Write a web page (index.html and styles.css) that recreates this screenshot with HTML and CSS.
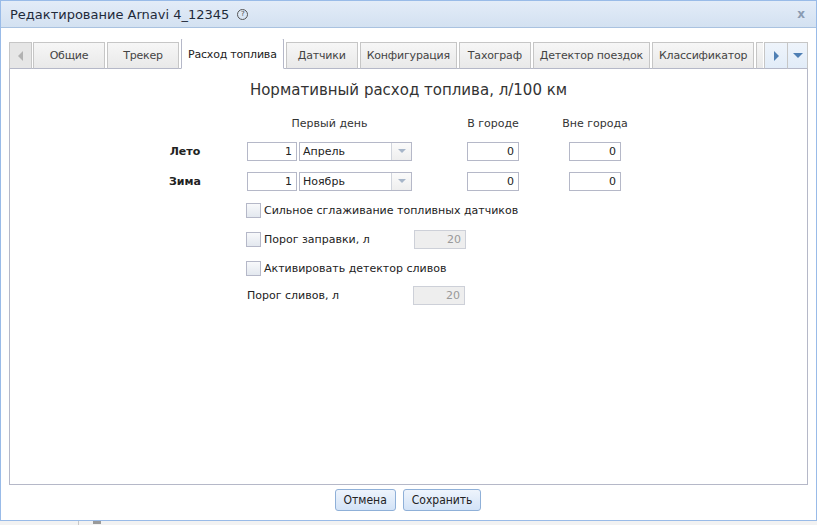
FILE: index.html
```html
<!DOCTYPE html>
<html>
  <head>
    <title>Редактирование Arnavi 4_12345</title>
    <link rel="stylesheet" href="styles.css">
  </head>
  <body>
    <div class="dialog">
      <div class="header">
        <span class="header-title">Редактирование Arnavi 4_12345</span>
        <span class="help">?</span>
        <span class="close">x</span>
      </div>

      <div class="body">
        <div class="tabbar">
          <div class="scroll scroll-left"><span class="tri-left"></span></div>
          <div class="tabs">
            <div class="tab">Общие</div>
            <div class="tab">Трекер</div>
            <div class="tab active">Расход топлива</div>
            <div class="tab">Датчики</div>
            <div class="tab">Конфигурация</div>
            <div class="tab">Тахограф</div>
            <div class="tab">Детектор поездок</div>
            <div class="tab">Классификатор</div>
            <div class="tab tab-cut"></div>
          </div>
          <div class="scroll scroll-right"><span class="tri-right"></span></div>
          <div class="scroll scroll-menu"><span class="tri-down"></span></div>
        </div>

        <div class="panel">
          <p class="panel-title">Нормативный расход топлива, л/100 км</p>

          <div class="row heads">
            <div class="season"></div>
            <div class="date-group">Первый день</div>
            <div class="gap-a"></div>
            <div class="num-col">В городе</div>
            <div class="gap-b"></div>
            <div class="num-col">Вне города</div>
          </div>

          <div class="row season-row">
            <div class="season">Лето</div>
            <div class="date-group">
              <input class="field day" value="1">
              <div class="combo"><span>Апрель</span><span class="combo-btn"><span class="tri-small"></span></span></div>
            </div>
            <div class="gap-a"></div>
            <input class="field num-col" value="0">
            <div class="gap-b"></div>
            <input class="field num-col" value="0">
          </div>

          <div class="row season-row">
            <div class="season">Зима</div>
            <div class="date-group">
              <input class="field day" value="1">
              <div class="combo"><span>Ноябрь</span><span class="combo-btn"><span class="tri-small"></span></span></div>
            </div>
            <div class="gap-a"></div>
            <input class="field num-col" value="0">
            <div class="gap-b"></div>
            <input class="field num-col" value="0">
          </div>

          <div class="opt first">
            <span class="check"></span>
            <span>Сильное сглаживание топливных датчиков</span>
          </div>

          <div class="opt">
            <span class="check"></span>
            <span class="opt-label">Порог заправки, л</span>
            <input class="field disabled" value="20" disabled>
          </div>

          <div class="opt">
            <span class="check"></span>
            <span>Активировать детектор сливов</span>
          </div>

          <div class="opt last">
            <span class="opt-label wide">Порог сливов, л</span>
            <input class="field disabled" value="20" disabled>
          </div>
        </div>

        <div class="footer">
          <button class="btn">Отмена</button>
          <button class="btn">Сохранить</button>
        </div>
      </div>
    </div>

    <div class="below">
      <span class="below-line"></span>
      <span class="below-icon"></span>
    </div>
  </body>
</html>
```

FILE: styles.css
```css
body{
  margin: 0;
  background-color: #f2f2f2;
  font-family: "DejaVu Sans", Verdana, sans-serif;
  font-size: 11px;
  color: #222;
  overflow: hidden;
  white-space: nowrap;
}

.dialog{
  width: 817px;
  height: 521px;
  box-sizing: border-box;
  border: 1px solid #99bbe8;
  background-color: white;
}

.header{
  height: 26px;
  display: flex;
  align-items: center;
  padding: 0 9px;
  background: linear-gradient(#e3ecf8, #d3e1f1);
  border-bottom: 1px solid #a9c2e0;
}

.header-title{
  font-size: 13px;
  color: #1e2a3a;
}

.help{
  width: 9px;
  height: 9px;
  margin-left: 8px;
  border: 1px solid #555;
  border-radius: 50%;
  font-size: 7px;
  line-height: 9px;
  text-align: center;
  color: #444;
}

.close{
  margin-left: auto;
  margin-right: 2px;
  font-weight: bold;
  font-size: 12px;
  color: #8a9bb2;
}

.body{
  padding: 11px 8px 0 8px;
}

.tabbar{
  display: flex;
  align-items: flex-end;
  height: 30px;
  margin-bottom: -1px;
  position: relative;
  z-index: 1;
}

.tabs{
  flex: 1;
  display: flex;
  align-items: flex-end;
  height: 30px;
  overflow: hidden;
  margin-left: 1px;
  margin-right: 1px;
}

.tab{
  flex-shrink: 0;
  height: 25px;
  line-height: 25px;
  min-width: 58px;
  padding: 0 6px;
  margin-right: 2px;
  text-align: center;
  letter-spacing: -0.2px;
  color: #444;
  background: linear-gradient(#f6f6f6, #e9e9e9);
  border: 1px solid #c6c6c6;
  border-bottom: 1px solid #b5b8c8;
}

.tab.active{
  height: 29px;
  line-height: 31px;
  color: #222;
  background: white;
  border-color: #b5b8c8;
  border-bottom-color: white;
  border-radius: 2px 2px 0 0;
}

.tab-cut{
  min-width: 20px;
}

.scroll{
  flex-shrink: 0;
  height: 25px;
  display: flex;
  align-items: center;
  justify-content: center;
  border: 1px solid #c6c6c6;
  border-bottom: 1px solid #b5b8c8;
}

.scroll-left{
  width: 21px;
  background: #e6e6e6;
}

.scroll-right{
  width: 22px;
  background: linear-gradient(#eef4fb, #e2ecf8);
}

.scroll-menu{
  width: 19px;
  border-left: none;
  background: linear-gradient(#eef4fb, #e2ecf8);
}

.tri-left{
  border-right: 5px solid #b2b2b2;
  border-top: 5px solid transparent;
  border-bottom: 5px solid transparent;
}

.tri-right{
  border-left: 5px solid #4f7fb4;
  border-top: 5px solid transparent;
  border-bottom: 5px solid transparent;
}

.tri-down{
  border-top: 5px solid #4f7fb4;
  border-left: 5px solid transparent;
  border-right: 5px solid transparent;
}

.panel{
  height: 415px;
  border: 1px solid #b5b8c8;
  background: white;
}

.panel-title{
  margin: 11px 0 0 0;
  text-align: center;
  font-size: 15px;
  line-height: 20px;
  color: #333;
}

.row{
  display: flex;
  align-items: center;
  margin-left: 150px;
}

.heads{
  margin-top: 17px;
  line-height: 14px;
  color: #333;
}

.heads .date-group,
.heads .num-col{
  justify-content: center;
  text-align: center;
  flex-shrink: 0;
}

.heads .num-col{
  display: flex;
}

.season-row{
  height: 20px;
  margin-top: 10px;
}

.season{
  flex-shrink: 0;
  width: 50px;
  margin-right: 37px;
  text-align: center;
  font-weight: bold;
}

.date-group{
  flex-shrink: 0;
  width: 165px;
  display: flex;
  gap: 2px;
}

.gap-a{
  flex-shrink: 0;
  width: 55px;
}

.gap-b{
  flex-shrink: 0;
  width: 50px;
}

.num-col{
  width: 52px;
}

.field{
  box-sizing: border-box;
  height: 19px;
  border: 1px solid #b5b8c8;
  padding: 0 4px;
  font-family: "DejaVu Sans", Verdana, sans-serif;
  font-size: 11px;
  text-align: right;
  color: #222;
  background: white;
}

.day{
  width: 50px;
}

.combo{
  box-sizing: border-box;
  width: 113px;
  height: 19px;
  display: flex;
  align-items: center;
  border: 1px solid #b5b8c8;
  padding-left: 3px;
  justify-content: space-between;
}

.combo-btn{
  width: 19px;
  height: 17px;
  display: flex;
  align-items: center;
  justify-content: center;
  border-left: 1px solid #d0d4dc;
  background: linear-gradient(#fbfbfb, #eeeeee);
}

.tri-small{
  border-top: 4px solid #a7b6c9;
  border-left: 4px solid transparent;
  border-right: 4px solid transparent;
}

.opt{
  display: flex;
  align-items: center;
  height: 20px;
  margin-top: 9px;
  margin-left: 236px;
}

.opt.last{
  margin-top: 7px;
  margin-left: 237px;
}

.check{
  width: 13px;
  height: 13px;
  margin-right: 3px;
  border: 1px solid #b5b8c8;
  background: linear-gradient(#f8f9fb, #e3e8ef);
}

.opt-label{
  width: 150px;
}

.opt-label.wide{
  width: 166px;
}

.field.disabled{
  width: 52px;
  background: #eeeeee;
  color: #999;
  border-color: #cdd0d8;
}

.footer{
  display: flex;
  justify-content: center;
  gap: 7px;
  padding-top: 4px;
  margin-left: -1px;
}

.btn{
  height: 22px;
  padding: 0 8px;
  font-family: "DejaVu Sans Condensed", "DejaVu Sans", sans-serif;
  font-size: 12px;
  color: #222;
  border: 1px solid #8fb0d8;
  border-radius: 3px;
  background: linear-gradient(#eef4fc, #d3e3f7);
}

.below{
  height: 4px;
  position: relative;
}

.below-line{
  position: absolute;
  left: 78px;
  top: 0;
  width: 1px;
  height: 4px;
  background: #c8c8c8;
}

.below-icon{
  position: absolute;
  left: 93px;
  top: 0;
  width: 8px;
  height: 3px;
  background: #9a9a9a;
}
```
